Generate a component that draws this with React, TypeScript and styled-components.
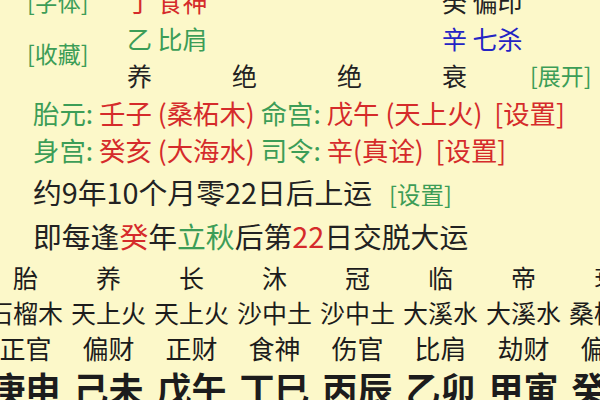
import React from "react";
import styled, { createGlobalStyle } from "styled-components";

const Global = createGlobalStyle`
  html, body {
    margin: 0;
    padding: 0;
    background: #fcf8c9;
    overflow: hidden;
  }
`;

const FONT = `"Noto Sans CJK SC", "Noto Sans", sans-serif`;

const Page = styled.div`
  width: 600px;
  height: 400px;
  overflow: hidden;
  background: #fcf8c9;
  font-family: ${FONT};
  color: #222;
`;

const Top = styled.div`
  display: flex;
  margin-top: -17px;
`;

const Labels = styled.div`
  width: 127px;
  padding-left: 27px;
  box-sizing: border-box;
  display: flex;
  flex-direction: column;
  gap: 15px;
`;

const Link = styled.span<{ $color?: string; $size?: number }>`
  color: ${(p) => p.$color || "#3c9d57"};
  font-size: ${(p) => p.$size || 23}px;
  line-height: 37px;
  white-space: nowrap;
`;

const Pillars = styled.div`
  display: grid;
  grid-template-columns: 105px 105px 105px 88px;
  grid-auto-rows: 37px;
`;

const Cell = styled.div<{ $color?: string }>`
  font-size: 25px;
  line-height: 37px;
  color: ${(p) => p.$color || "#222"};
  white-space: nowrap;
`;

const Expand = styled.div`
  display: flex;
  flex-direction: column;
  justify-content: flex-end;
`;

const Info = styled.div`
  padding-left: 33px;
`;

const InfoLine = styled.div<{ $lh: number; $size: number; $mt?: number }>`
  font-size: ${(p) => p.$size}px;
  line-height: ${(p) => p.$lh}px;
  margin-top: ${(p) => p.$mt || 0}px;
  white-space: nowrap;
  color: #222;
`;

const C = styled.span<{ $c: "g" | "r" | "k" }>`
  color: ${(p) => (p.$c === "g" ? "#3c9d57" : p.$c === "r" ? "#d52b2b" : "#222")};
`;

const Small = styled.span`
  font-size: 23.5px;
  color: #3c9d57;
  margin-left: 17px;
`;

const Grid = styled.div`
  margin-top: 2px;
  margin-left: -16px;
  display: grid;
  grid-template-columns: repeat(8, 83px);
`;

const GCell = styled.div<{ $size: number; $lh: number; $bold?: boolean }>`
  text-align: center;
  font-size: ${(p) => p.$size}px;
  line-height: ${(p) => p.$lh}px;
  font-weight: ${(p) => (p.$bold ? 700 : 400)};
  white-space: nowrap;
  color: #1c1c1c;
`;

const stages = ["胎", "养", "长", "沐", "冠", "临", "帝", "衰"];
const nayin = ["石榴木", "天上火", "天上火", "沙中土", "沙中土", "大溪水", "大溪水", "桑柘木"];
const gods = ["正官", "偏财", "正财", "食神", "伤官", "比肩", "劫财", "偏印"];
const pillars = ["庚申", "己未", "戊午", "丁巳", "丙辰", "乙卯", "甲寅", "癸丑"];

export default function App() {
  return (
    <Page>
      <Global />
      <Top>
        <Labels>
          <Link>[字体]</Link>
          <Link>[收藏]</Link>
        </Labels>
        <Pillars>
          <Cell $color="#d52b2b">丁 食神</Cell>
          <Cell />
          <Cell />
          <Cell>癸 偏印</Cell>
          <Cell $color="#3c9d57">乙 比肩</Cell>
          <Cell />
          <Cell />
          <Cell $color="#2424c4">辛 七杀</Cell>
          <Cell>养</Cell>
          <Cell>绝</Cell>
          <Cell>绝</Cell>
          <Cell>衰</Cell>
        </Pillars>
        <Expand>
          <Link>[展开]</Link>
        </Expand>
      </Top>
      <Info>
        <InfoLine $lh={37} $size={26.4}>
          <C $c="g">胎元:</C> <C $c="r">壬子 (桑柘木)</C> <C $c="g">命宫:</C>{" "}
          <C $c="r">戊午 (天上火)</C>&nbsp; <C $c="r">[设置]</C>
        </InfoLine>
        <InfoLine $lh={37} $size={26.4}>
          <C $c="g">身宫:</C> <C $c="r">癸亥 (大海水)</C> <C $c="g">司令:</C>{" "}
          <C $c="r">辛(真诠)</C>&nbsp; <C $c="r">[设置]</C>
        </InfoLine>
        <InfoLine $lh={42} $size={28.8} $mt={3}>
          约9年10个月零22日后上运<Small>[设置]</Small>
        </InfoLine>
        <InfoLine $lh={42} $size={28.8}>
          即每逢<C $c="r">癸</C>年<C $c="g">立秋</C>后第<C $c="r">22</C>日交脱大运
        </InfoLine>
      </Info>
      <Grid>
        {stages.map((s, i) => (
          <GCell key={"s" + i} $size={25} $lh={36}>{s}</GCell>
        ))}
        {nayin.map((s, i) => (
          <GCell key={"n" + i} $size={25} $lh={35}>{s}</GCell>
        ))}
        {gods.map((s, i) => (
          <GCell key={"g" + i} $size={26} $lh={36}>{s}</GCell>
        ))}
        {pillars.map((s, i) => (
          <GCell key={"p" + i} $size={35} $lh={44} $bold>{s}</GCell>
        ))}
      </Grid>
    </Page>
  );
}
